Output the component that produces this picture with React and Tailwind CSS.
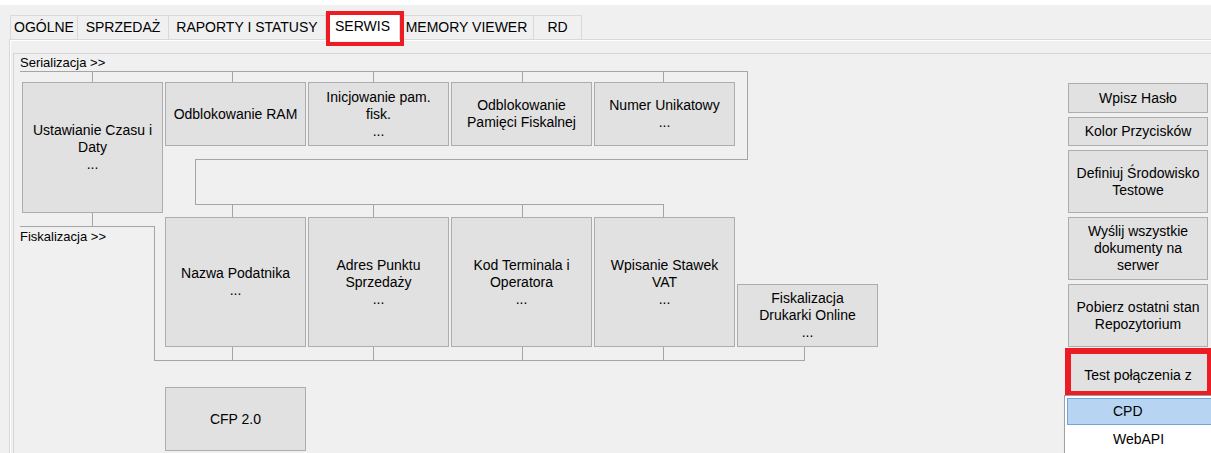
const tabs = [
  { label: "OGÓLNE", cls: "w-[68px]" },
  { label: "SPRZEDAŻ", cls: "w-[92px]" },
  { label: "RAPORTY I STATUSY", cls: "w-[158px]" },
  { label: "SERWIS", cls: "w-[75px]", active: true },
  { label: "MEMORY VIEWER", cls: "w-[135px]" },
  { label: "RD", cls: "w-[49px]" },
];

// diagram canvas origin in page coordinates
const OX = 14;
const OY = 54;

const nodes = [
  { x: 22, y: 82, w: 141, h: 131, lines: ["Ustawianie Czasu i", "Daty", "..."] },
  { x: 165, y: 82, w: 141, h: 64, lines: ["Odblokowanie RAM"] },
  { x: 308, y: 82, w: 141, h: 64, lines: ["Inicjowanie pam.", "fisk.", "..."] },
  { x: 451, y: 82, w: 141, h: 64, lines: ["Odblokowanie", "Pamięci Fiskalnej"] },
  { x: 594, y: 82, w: 141, h: 64, lines: ["Numer Unikatowy", "..."] },
  { x: 165, y: 217, w: 141, h: 130, lines: ["Nazwa Podatnika", "..."] },
  { x: 308, y: 217, w: 141, h: 130, lines: ["Adres Punktu", "Sprzedaży", "..."] },
  { x: 451, y: 217, w: 141, h: 130, lines: ["Kod Terminala i", "Operatora", "..."] },
  { x: 594, y: 217, w: 141, h: 130, lines: ["Wpisanie Stawek", "VAT", "..."] },
  { x: 737, y: 284, w: 141, h: 63, lines: ["Fiskalizacja", "Drukarki Online", "..."] },
  { x: 165, y: 387, w: 141, h: 64, lines: ["CFP 2.0"] },
];

const wires = [
  // serializacja bracket
  { x: 20, y: 71, w: 728, h: 1 },
  { x: 747, y: 71, w: 1, h: 89 },
  { x: 195, y: 159, w: 553, h: 1 },
  { x: 195, y: 159, w: 1, h: 46 },
  { x: 195, y: 204, w: 469, h: 1 },
  ...[92, 232, 373, 522, 663].map((x) => ({ x, y: 71, w: 1, h: 11 })),
  ...[232, 373, 522, 663].map((x) => ({ x, y: 204, w: 1, h: 13 })),
  // fiskalizacja bracket
  { x: 92, y: 213, w: 1, h: 13 },
  { x: 20, y: 226, w: 135, h: 1 },
  { x: 154, y: 226, w: 1, h: 135 },
  { x: 154, y: 360, w: 651, h: 1 },
  ...[232, 373, 522, 663, 804].map((x) => ({ x, y: 347, w: 1, h: 13 })),
];

const sideButtons = [
  { lines: ["Wpisz Hasło"], cls: "h-[30px]" },
  { lines: ["Kolor Przycisków"], cls: "h-[29px]" },
  { lines: ["Definiuj Środowisko", "Testowe"], cls: "h-[63px]" },
  { lines: ["Wyślij wszystkie", "dokumenty na", "serwer"], cls: "h-[63px]" },
  { lines: ["Pobierz ostatni stan", "Repozytorium"], cls: "h-[63px]" },
];

function WinButton({ lines, className = "", style }) {
  return (
    <div
      style={style}
      className={`flex flex-col items-center justify-center bg-[#e1e1e1] border border-[#adadad] text-[14px] leading-[17px] text-black text-center ${className}`}
    >
      {lines.map((l, i) => (
        <span key={i} className="whitespace-nowrap">
          {l}
        </span>
      ))}
    </div>
  );
}

export default function App() {
  return (
    <div className="relative w-[1211px] h-[453px] overflow-hidden bg-[#f0f0f0] font-['Liberation_Sans',Arial,sans-serif] text-black">
      <div className="h-[5px] bg-white" />

      {/* tab strip */}
      <div className="flex items-end h-[34px] pl-[10px]">
        {tabs.map((t) =>
          t.active ? (
            <div
              key={t.label}
              className={`relative z-10 -mb-px -ml-px h-[27px] bg-white border border-b-0 border-[#d9d9d9] flex items-start justify-center pt-[2px] text-[14px] ${t.cls}`}
            >
              {t.label}
            </div>
          ) : (
            <div
              key={t.label}
              className={`-ml-px first:ml-0 h-[24px] bg-[#f0f0f0] border border-b-0 border-[#d9d9d9] flex items-center justify-center text-[14px] ${t.cls}`}
            >
              {t.label}
            </div>
          )
        )}
      </div>

      {/* tab page */}
      <div className="ml-[9px] h-[414px] border-t border-l border-[#d9d9d9] shadow-[inset_1px_1px_0_#ffffff]">
        <div className="mt-[13px] ml-[3px] h-[400px] border-t border-l border-[#d5d5d5] flex">
          {/* diagram */}
          <div className="relative flex-1 h-full">
            <div
              className="absolute text-[13px] leading-[15px]"
              style={{ left: 20 - OX, top: 55 - OY }}
            >
              Serializacja &gt;&gt;
            </div>
            <div
              className="absolute text-[13px] leading-[15px]"
              style={{ left: 20 - OX, top: 229 - OY }}
            >
              Fiskalizacja &gt;&gt;
            </div>

            {wires.map((w, i) => (
              <div
                key={i}
                className="absolute bg-[#a5a5a5]"
                style={{ left: w.x - OX, top: w.y - OY, width: w.w, height: w.h }}
              />
            ))}

            {nodes.map((n, i) => (
              <WinButton
                key={i}
                lines={n.lines}
                className="absolute"
                style={{ left: n.x - OX, top: n.y - OY, width: n.w, height: n.h }}
              />
            ))}
          </div>

          {/* right column */}
          <div className="w-[140px] mr-[3px] pt-[29px] flex flex-col gap-[4px]">
            {sideButtons.map((b, i) => (
              <WinButton key={i} lines={b.lines} className={b.cls} />
            ))}
            <div className="h-[45px] pt-[4px] flex items-center justify-center bg-[#e1e1e1] border border-[#adadad] text-[14px]">
              Test połączenia z
            </div>
          </div>
        </div>
      </div>

      {/* highlight frames */}
      <div className="absolute left-[326px] top-[11px] w-[78px] h-[35px] border-4 border-[#ed1c24] z-20" />
      <div className="absolute left-[1065px] top-[348px] w-[148px] h-[49px] border-[6px] border-[#ed1c24] z-20" />

      {/* dropdown menu */}
      <div className="absolute left-[1064px] top-[395px] w-[150px] h-[62px] bg-white border border-[#a0a0a0] shadow-[2px_2px_3px_rgba(0,0,0,0.2)] z-30 pt-[2px] pl-[2px]">
        <div className="h-[27px] flex items-center pl-[45px] bg-[#b7d5f2] border border-[#6ea6dc] text-[14px]">
          CPD
        </div>
        <div className="h-[28px] flex items-center pl-[46px] text-[14px]">
          WebAPI
        </div>
      </div>
    </div>
  );
}
